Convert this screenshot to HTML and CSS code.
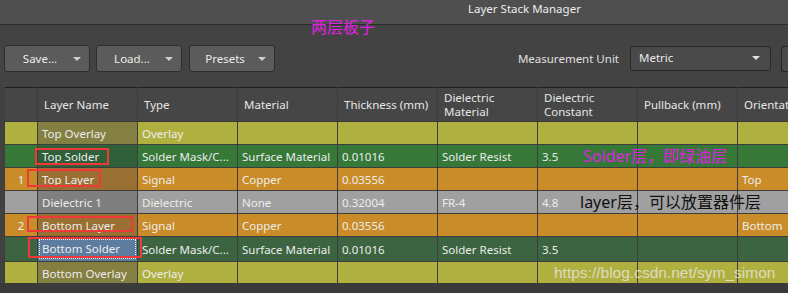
FILE: index.html
```html
<!DOCTYPE html>
<html lang="zh">
<head>
    <meta charset="UTF-8">
    <title>Layer Stack Manager</title>
    <link rel="stylesheet" href="styles.css">
</head>
<body>
<div class="titlebar">
    <span class="title">Layer Stack Manager</span>
</div>
<div class="toolbar">
    <button class="btn">Save...<span class="caret"></span></button>
    <button class="btn">Load...<span class="caret"></span></button>
    <button class="btn">Presets<span class="caret"></span></button>
    <div class="spacer"></div>
    <label class="unit-label">Measurement Unit</label>
    <div class="select">Metric<span class="caret"></span></div>
    <div class="stub"></div>
</div>
<div class="stack">
    <table>
        <colgroup>
            <col class="c-num"><col><col><col><col><col><col><col><col>
        </colgroup>
        <thead>
            <tr>
                <th></th><th>Layer Name</th><th>Type</th><th>Material</th><th>Thickness (mm)</th><th>Dielectric<br>Material</th><th>Dielectric<br>Constant</th><th>Pullback (mm)</th><th>Orientation</th>
            </tr>
        </thead>
        <tbody>
            <tr class="overlay">
                <td></td><td class="name">Top Overlay</td><td>Overlay</td><td></td><td></td><td></td><td></td><td></td><td></td>
            </tr>
            <tr class="solder">
                <td></td><td class="name">Top Solder</td><td>Solder Mask/C...</td><td>Surface Material</td><td>0.01016</td><td>Solder Resist</td><td>3.5</td><td></td><td></td>
            </tr>
            <tr class="signal">
                <td class="num">1</td><td class="name">Top Layer</td><td>Signal</td><td>Copper</td><td>0.03556</td><td></td><td></td><td></td><td>Top</td>
            </tr>
            <tr class="dielectric">
                <td></td><td class="name">Dielectric 1</td><td>Dielectric</td><td>None</td><td>0.32004</td><td>FR-4</td><td>4.8</td><td></td><td></td>
            </tr>
            <tr class="signal">
                <td class="num">2</td><td class="name">Bottom Layer</td><td>Signal</td><td>Copper</td><td>0.03556</td><td></td><td></td><td></td><td>Bottom</td>
            </tr>
            <tr class="solder bottom">
                <td></td><td class="name selected"><span>Bottom Solder</span></td><td>Solder Mask/C...</td><td>Surface Material</td><td>0.01016</td><td>Solder Resist</td><td>3.5</td><td></td><td></td>
            </tr>
            <tr class="overlay">
                <td></td><td class="name">Bottom Overlay</td><td>Overlay</td><td></td><td></td><td></td><td></td><td></td><td></td>
            </tr>
        </tbody>
    </table>
</div>

<!-- annotations drawn over the screenshot -->
<div class="note note-board">两层板子</div>
<div class="note note-solder">Solder层，即绿油层</div>
<div class="note note-layer">layer层，可以放置器件层</div>
<div class="mark mark-top-solder"></div>
<div class="mark mark-top-layer"></div>
<div class="mark mark-bottom-layer"></div>
<div class="mark mark-bottom-solder"></div>
<div class="watermark">https://blog.csdn.net/sym_simon</div>
</body>
</html>
```

FILE: styles.css
```css
body {
    margin: 0;
    width: 788px;
    height: 293px;
    overflow: hidden;
    position: relative;
    background: #3a3a3a;
    font-family: 'Noto Sans', 'Segoe UI', sans-serif;
    font-size: 11.5px;
    color: #e8e8e8;
}
.titlebar {
    height: 24px;
    background: #4f4f4f;
    border-bottom: 1px solid #2c2c2c;
    padding-left: 468px;
}
.title {
    line-height: 17px;
    font-size: 11.5px;
    color: #ececec;
}
.toolbar {
    height: 62px;
    box-sizing: border-box;
    padding: 5px 0 0 4px;
    background: #434343;
    display: flex;
    align-items: center;
    gap: 6px;
}
.btn {
    position: relative;
    width: 86px;
    height: 27px;
    background: #5b5b5b;
    border: 1px solid #2e2e2e;
    border-radius: 3px;
    color: #ececec;
    font-family: inherit;
    font-size: 11.5px;
    padding: 0 14px 0 0;
    text-align: center;
}
.btn:nth-child(3) {
    margin-left: 1px;
}
.caret {
    position: absolute;
    right: 8px;
    top: 11px;
    width: 0;
    height: 0;
    border-left: 4px solid transparent;
    border-right: 4px solid transparent;
    border-top: 4px solid #d0d0d0;
}
.spacer {
    flex: 1;
}
.unit-label {
    color: #e0e0e0;
    font-size: 11.5px;
    margin-right: 5px;
}
.select {
    position: relative;
    width: 131px;
    height: 23px;
    padding-left: 8px;
    line-height: 21px;
    font-size: 11.5px;
    background: #4a4a4a;
    border: 1px solid #262626;
    border-radius: 3px;
    color: #e8e8e8;
}
.select .caret {
    right: 10px;
    top: 9px;
    border-top-color: #e0e0e0;
}
.stub {
    width: 10px;
    height: 24px;
    margin-left: 4px;
    margin-right: -4px;
    background: #4a4a4a;
    border: 1px solid #262626;
    border-right: none;
    border-radius: 3px 0 0 3px;
}
.stack {
    background: #414141;
    padding-left: 4px;
    height: 196px;
    overflow: hidden;
}
table {
    border-collapse: collapse;
    table-layout: fixed;
    width: 834px;
    border-left: 1px solid #1e1e1e;
    border-top: 1px solid #1e1e1e;
}
col {
    width: 100px;
}
col.c-num {
    width: 33px;
}
th {
    height: 33px;
    background: #464646;
    border-left: 1px solid #3c3c3c;
    border-right: 1px solid #3c3c3c;
    border-bottom: 1px solid #3c3c3c;
    text-align: left;
    font-weight: normal;
    padding: 0 0 0 6px;
    line-height: 14px;
    white-space: nowrap;
    overflow: hidden;
    color: #e6e6e6;
}
td {
    height: 22px;
    border: 1px solid #3d3d3d;
    padding: 0 0 0 4px;
    white-space: nowrap;
    overflow: hidden;
    color: #ececec;
}
td.num {
    text-align: center;
    padding: 0;
}
.overlay td { background: #b0b040; }
.overlay td.name { background: #848042; }
.solder td { background: #367838; }
.solder td.name { background: #30603a; }
.solder.bottom td { background: #3c6440; }
.signal td { background: #c98c28; }
.signal td.name { background: #9a7032; }
.dielectric td { background: #a0a0a0; }
.dielectric td.name { background: #7f7f7f; }
.solder.bottom td.selected {
    background: #5d7da0;
    padding: 1px;
}
.selected span {
    display: block;
    height: 18px;
    line-height: 18px;
    padding-left: 2px;
    border: 1px dotted #f0f0f0;
}
.note {
    position: absolute;
    font-family: 'Noto Sans', 'Noto Sans CJK SC', sans-serif;
    white-space: nowrap;
}
.note-board {
    left: 311px;
    top: 14px;
    font-size: 16px;
    color: #e020e0;
}
.note-solder {
    left: 583px;
    top: 143px;
    font-size: 16px;
    color: #e020e0;
}
.note-layer {
    left: 580px;
    top: 189px;
    font-size: 16px;
    color: #111;
}
.mark {
    position: absolute;
    border: 2px solid #f03838;
}
.mark-top-solder { left: 35px; top: 148px; width: 70px; height: 13px; }
.mark-top-layer { left: 27px; top: 169px; width: 70px; height: 14px; }
.mark-bottom-layer { left: 27px; top: 216px; width: 102px; height: 12px; }
.mark-bottom-solder { left: 28px; top: 237px; width: 110px; height: 17px; }
.watermark {
    position: absolute;
    left: 554px;
    top: 264px;
    font-family: 'Liberation Sans', sans-serif;
    font-size: 15.5px;
    color: rgba(235, 235, 235, 0.75);
}
```
